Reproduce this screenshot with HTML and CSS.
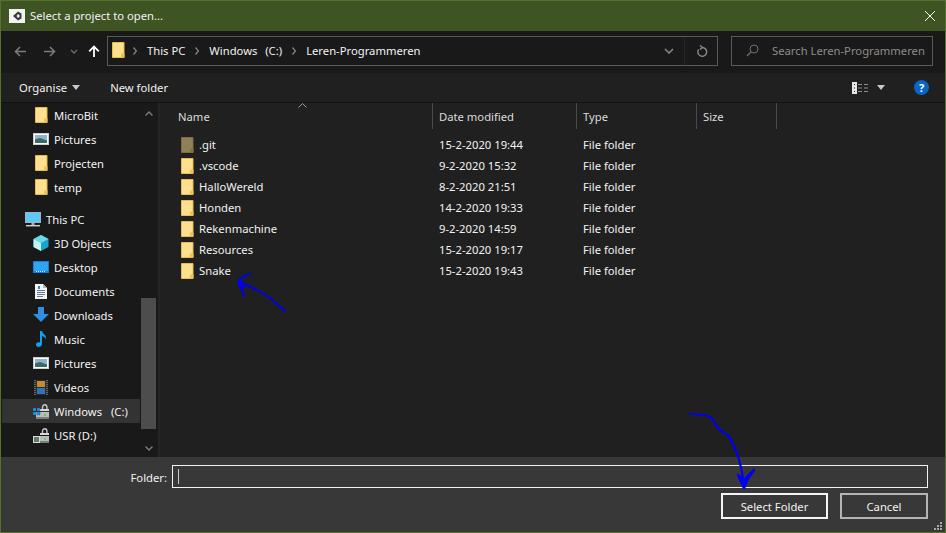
FILE: index.html
```html
<!DOCTYPE html>
<html lang="en">
<head>
    <meta charset="UTF-8">
    <meta name="viewport" content="width=device-width, initial-scale=1.0">
    <title>Select a project to open...</title>
    <link rel="stylesheet" href="styles.css">
</head>
<body>
    <svg class="defs" width="0" height="0">
        <defs>
            <symbol id="folder" viewBox="0 0 13 16">
                <path d="M.5.5h11.500v15H.5z" fill="#fde08e" stroke="#e8bc4e"/>
                <path d="M9 15.500v-4h3.500v4z" fill="#e9c25f"/>
            </symbol>
            <symbol id="pictures" viewBox="0 0 16 12">
                <rect x=".5" y=".5" width="15" height="11" fill="#fff" stroke="#cfcfcf"/>
                <rect x="2" y="2" width="12" height="8" fill="#8fb3cf"/>
                <path d="M2 6.500l5-1.500 7 2.500V10H2z" fill="#3d6a62"/>
            </symbol>
            <symbol id="chevron" viewBox="0 0 4 8">
                <path d="M.5.5L3.500 4 .5 7.500" stroke="#8a8a8a" stroke-width="1.200" fill="none"/>
            </symbol>
            <symbol id="lock" viewBox="0 0 16 15">
                <path d="M9.500 5V3a2.200 2.200 0 0 1 4.400 0v2" stroke="#c8c8c8" stroke-width="1.400" fill="none"/>
                <rect x="7" y="5" width="9" height="2" fill="#d8d8d8"/>
                <rect x="3" y="8" width="13" height="7" fill="#bcbcbc"/>
                <rect x="3" y="13" width="13" height="2" fill="#7d7d7d"/>
                <path d="M11 11h2" stroke="#34d64a" stroke-width="1.500"/>
            </symbol>
        </defs>
    </svg>
    <div class="dialog">
        <header class="titlebar">
            <svg class="app-icon" width="16" height="14" viewBox="0 0 16 14">
                <rect width="16" height="14" fill="#f4f4f4"/>
                <path d="M9 2.500l3.500 2v5l-3.500 2-5-4.500z" fill="#3a3a3a"/>
                <path d="M9 5L7.500 7 9 9l1.500-.9V5.900z" fill="#f4f4f4"/>
            </svg>
            <span class="title">Select a project to open...</span>
            <svg class="close" width="10" height="10" viewBox="0 0 10 10"><path d="M0 0l10 10M10 0L0 10" stroke="#fff" fill="none"/></svg>
        </header>

        <div class="addressbar">
            <div class="nav">
                <svg width="12" height="11" viewBox="0 0 12 11"><path d="M12 5.500H1.500M6 1L1.500 5.500 6 10" stroke="#7c7c7c" stroke-width="1.500" fill="none"/></svg>
                <svg class="nav-fwd" width="12" height="11" viewBox="0 0 12 11"><path d="M0 5.500h10.500M6 1l4.500 4.500L6 10" stroke="#7c7c7c" stroke-width="1.500" fill="none"/></svg>
                <svg class="nav-down" width="8" height="5" viewBox="0 0 8 5"><path d="M1 1l3 3 3-3" stroke="#6e6e6e" stroke-width="1.300" fill="none"/></svg>
                <svg class="nav-up" width="12" height="12" viewBox="0 0 12 12"><path d="M6 12V2M1.200 6.300L6 1.500l4.800 4.800" stroke="#fff" stroke-width="1.800" fill="none"/></svg>
            </div>
            <div class="path">
                <svg class="crumb path-folder" width="13" height="16"><use href="#folder"/></svg>
                <svg class="crumb-sep" width="4" height="8"><use href="#chevron"/></svg><span class="crumb">This PC</span>
                <svg class="crumb-sep" width="4" height="8"><use href="#chevron"/></svg><span class="crumb crumb-drive">Windows&nbsp; (C:)</span>
                <svg class="crumb-sep" width="4" height="8"><use href="#chevron"/></svg><span class="crumb">Leren-Programmeren</span>
                <span class="path-end">
                    <svg width="10" height="6" viewBox="0 0 10 6"><path d="M1 1l4 4 4-4" stroke="#8a8a8a" stroke-width="1.500" fill="none"/></svg>
                    <i class="path-div"></i>
                    <svg width="11" height="12" viewBox="0 0 11 12"><path d="M3 .5l2.500 2L3 4.500M5 2.500A4.400 4.400 0 1 1 1.700 4.300" stroke="#8a8a8a" stroke-width="1.400" fill="none"/></svg>
                </span>
            </div>
            <div class="search">
                <svg width="13" height="13" viewBox="0 0 13 13"><circle cx="8" cy="5" r="4" stroke="#6f6f6f" fill="none"/><path d="M5 8l-4 4" stroke="#6f6f6f" stroke-width="1.300"/></svg>
                <span>Search Leren-Programmeren</span>
            </div>
        </div>

        <div class="toolbar">
            <span class="tool">Organise<i class="caret"></i></span>
            <span class="tool tool-new">New folder</span>
            <span class="toolbar-right">
                <svg width="16" height="12" viewBox="0 0 16 12">
                    <rect width="5" height="12" fill="#e6e6e6"/>
                    <path d="M2 2h1v1H2zM2 5.500h1v1H2zM2 9h1v1H2z" fill="#333"/>
                    <path d="M6 2.500h4M12 2.500h4M6 6h4M12 6h4M6 9.500h4M12 9.500h4" stroke="#8c8c8c"/>
                </svg>
                <i class="caret caret-view"></i>
                <span class="help">?</span>
            </span>
        </div>

        <div class="main">
            <aside class="sidebar">
                <ul class="tree">
                    <li class="tree-item"><span class="tree-icon"><svg width="13" height="16"><use href="#folder"/></svg></span>MicroBit</li>
                    <li class="tree-item"><span class="tree-icon"><svg width="16" height="12"><use href="#pictures"/></svg></span>Pictures</li>
                    <li class="tree-item"><span class="tree-icon"><svg width="13" height="16"><use href="#folder"/></svg></span>Projecten</li>
                    <li class="tree-item"><span class="tree-icon"><svg width="13" height="16"><use href="#folder"/></svg></span>temp</li>
                    <li class="tree-item tree-root">
                        <span class="tree-icon"><svg width="16" height="15" viewBox="0 0 16 15"><rect x=".5" y=".5" width="15" height="10" fill="#5cc8f5" stroke="#9fb6c2"/><path d="M6.500 11h3v2h-3z" fill="#aaa"/><path d="M1 13.700h14" stroke="#ccc" stroke-width="1.500"/></svg></span>This PC
                    </li>
                    <li class="tree-item"><span class="tree-icon"><svg width="16" height="16" viewBox="0 0 16 16"><path d="M8 0l7.500 4v8L8 16 .5 12V4z" fill="#18a5c9"/><path d="M8 0l7.500 4L8 8 .5 4z" fill="#6ad9e8"/><path d="M.5 4L8 8v8L.5 12z" fill="#c4f3f6"/></svg></span>3D Objects</li>
                    <li class="tree-item"><span class="tree-icon"><svg width="16" height="12" viewBox="0 0 16 12"><rect width="16" height="12" fill="#0f7fd8"/><rect x="1" y="1" width="14" height="9" fill="#2fa6f5"/><path d="M3 10.500h10" stroke="#cde9ff" stroke-dasharray="1 1"/></svg></span>Desktop</li>
                    <li class="tree-item"><span class="tree-icon"><svg width="12" height="15" viewBox="0 0 12 15"><path d="M0 0h8l4 4v11H0z" fill="#f5f5f5"/><path d="M8 0v4h4z" fill="#b5b5b5"/><path d="M2 6.500h8M2 8.500h8M2 10.500h8M2 12.500h6" stroke="#5f7c96"/><path d="M3 2h2v3H3z" fill="#2b87d1"/></svg></span>Documents</li>
                    <li class="tree-item"><span class="tree-icon"><svg width="16" height="16" viewBox="0 0 16 16"><path d="M5 0h6v7h5l-8 8-8-8h5z" fill="#2e8fe0"/></svg></span>Downloads</li>
                    <li class="tree-item"><span class="tree-icon"><svg width="11" height="16" viewBox="0 0 11 16"><path d="M4 0h2c.5 3 5 4 4 8.500C9.500 6.500 8 5.500 6 5v8c0 2-2 3-3.500 3S0 15 0 13.500 2 11 4 11.500z" fill="#12a0ef"/></svg></span>Music</li>
                    <li class="tree-item"><span class="tree-icon"><svg width="16" height="12"><use href="#pictures"/></svg></span>Pictures</li>
                    <li class="tree-item"><span class="tree-icon"><svg width="14" height="15" viewBox="0 0 14 15"><rect width="14" height="15" fill="#2b2b2b"/><path d="M1 0v15M13 0v15" stroke="#999" stroke-dasharray="1 1"/><rect x="3" y="1" width="8" height="6" fill="#c58b2c"/><rect x="3" y="8" width="8" height="6" fill="#3273b8"/></svg></span>Videos</li>
                    <li class="tree-item is-selected"><span class="tree-icon"><svg width="16" height="15" viewBox="0 0 16 15"><use href="#lock"/><path d="M0 4h3v3H0zM4 4h3v3H4zM0 8h3v3H0zM4 8h3v3H4z" fill="#1e9cf0" stroke="#2a2a2a" stroke-width=".3"/></svg></span><span class="drive">Windows&nbsp; (C:)</span></li>
                    <li class="tree-item"><span class="tree-icon"><svg width="16" height="15" viewBox="0 0 16 15"><use href="#lock"/><rect x="0" y="8" width="7" height="7" fill="#d8d8d8"/><rect x="1" y="9" width="5" height="5" fill="#5c7f66"/></svg></span>USR (D:)</li>
                </ul>
                <div class="scrollbar">
                    <svg width="8" height="5" viewBox="0 0 8 5"><path d="M.5 4.500L4 1l3.500 3.500" stroke="#777" stroke-width="1.500" fill="none"/></svg>
                    <div class="scroll-track"><div class="scroll-thumb"></div></div>
                    <svg width="8" height="5" viewBox="0 0 8 5"><path d="M.5.5L4 4 7.500.5" stroke="#777" stroke-width="1.500" fill="none"/></svg>
                </div>
            </aside>

            <section class="files">
                <svg class="sort-arrow" width="9" height="5" viewBox="0 0 9 5"><path d="M.5 4.500l4-4 4 4" stroke="#9a9a9a" fill="none"/></svg>
                <div class="file-row file-head">
                    <span class="col-name">Name</span>
                    <span class="col-date">Date modified</span>
                    <span class="col-type">Type</span>
                    <span class="col-size">Size</span>
                </div>
                <div class="file-list">
                    <div class="file-row"><span class="col-name"><svg class="is-hidden" width="13" height="16"><use href="#folder"/></svg>.git</span><span class="col-date">15-2-2020 19:44</span><span class="col-type">File folder</span></div>
                    <div class="file-row"><span class="col-name"><svg width="13" height="16"><use href="#folder"/></svg>.vscode</span><span class="col-date">9-2-2020 15:32</span><span class="col-type">File folder</span></div>
                    <div class="file-row"><span class="col-name"><svg width="13" height="16"><use href="#folder"/></svg>HalloWereld</span><span class="col-date">8-2-2020 21:51</span><span class="col-type">File folder</span></div>
                    <div class="file-row"><span class="col-name"><svg width="13" height="16"><use href="#folder"/></svg>Honden</span><span class="col-date">14-2-2020 19:33</span><span class="col-type">File folder</span></div>
                    <div class="file-row"><span class="col-name"><svg width="13" height="16"><use href="#folder"/></svg>Rekenmachine</span><span class="col-date">9-2-2020 14:59</span><span class="col-type">File folder</span></div>
                    <div class="file-row"><span class="col-name"><svg width="13" height="16"><use href="#folder"/></svg>Resources</span><span class="col-date">15-2-2020 19:17</span><span class="col-type">File folder</span></div>
                    <div class="file-row"><span class="col-name"><svg width="13" height="16"><use href="#folder"/></svg>Snake</span><span class="col-date">15-2-2020 19:43</span><span class="col-type">File folder</span></div>
                </div>
            </section>
        </div>

        <footer class="footer">
            <div class="folder-row">
                <label class="folder-label">Folder:</label>
                <div class="folder-input"><i class="text-cursor"></i></div>
            </div>
            <div class="buttons">
                <button class="btn btn-primary">Select Folder</button>
                <button class="btn">Cancel</button>
            </div>
            <svg class="grip" width="8" height="8" viewBox="0 0 8 8"><path d="M6 0h2v2H6zM3 3h2v2H3zM6 3h2v2H6zM0 6h2v2H0zM3 6h2v2H3zM6 6h2v2H6z" fill="#a8a8a8"/></svg>
        </footer>

        <!-- hand drawn arrows on top of the screenshot -->
        <svg class="scribble" width="946" height="533" viewBox="0 0 946 533">
            <g stroke="#0000f0" fill="none" stroke-linecap="round" stroke-linejoin="round">
                <path d="M285 311c-5-4-10-9-15-13-5-4-11-7-17-10-4-2-8-4-12-6" stroke-width="2"/>
                <path d="M250 274c-4 1-9 3-11 6-2 3 0 6 2 9 2 2 3 5 3 7" stroke-width="2"/>
                <path d="M240 281l3 6" stroke-width="3"/>
                <path d="M690 414c7 0 14 0 20 3 4 2 5 7 8 11 3 4 7 5 10 7 4 5 6 12 9 18 2 7 4 13 5 20 1 5 2 10 2 15" stroke-width="2.200"/>
                <path d="M738 475l6 13 3-8 7-10-8 8-2 3-1-2z" fill="#0000f0" stroke-width="2.500"/>
            </g>
        </svg>
    </div>
</body>
</html>
```

FILE: styles.css
```css
* {
    box-sizing: border-box;
}
html, body {
    margin: 0;
    padding: 0;
}
body {
    font-family: "Noto Sans", Arial, sans-serif;
    font-size: 11.25px;
    color: #f2f2f2;
    background: #4f6b30;
    overflow: hidden;
}
.defs {
    position: absolute;
}
.dialog {
    position: relative;
    width: 946px;
    height: 533px;
    padding: 1px;
    display: flex;
    flex-direction: column;
    background: #55702f;
}
.titlebar {
    height: 30px;
    flex: none;
    display: flex;
    align-items: center;
    padding: 0 10px 0 8px;
    background: #3f5423;
}
.app-icon {
    margin-right: 5px;
}
.title {
    flex: 1;
    margin-bottom: 2px;
}
.close {
    margin-bottom: 1px;
}
.addressbar {
    height: 42px;
    flex: none;
    display: flex;
    align-items: flex-start;
    padding: 5px 12px 0 13px;
    background: #191919;
}
.nav {
    display: flex;
    align-items: center;
    width: 93px;
    height: 30px;
}
.nav-fwd {
    margin-left: 18px;
}
.nav-down {
    margin-left: 14px;
}
.nav-up {
    margin-left: 10px;
}
.path {
    width: 611px;
    height: 30px;
    display: flex;
    align-items: center;
    padding-left: 4px;
    border: 1px solid #5a5a5a;
}
.crumb {
    margin-bottom: 2px;
}
.crumb-sep {
    margin: 0 10px;
}
.path-folder {
    margin-right: -2px;
}
.crumb-drive {
    word-spacing: 1px;
}
.drive {
    word-spacing: 1.5px;
}
.path-end {
    margin-left: auto;
    height: 100%;
    display: flex;
    align-items: center;
}
.path-div {
    width: 1px;
    height: 100%;
    margin: 0 12px 0 10px;
    background: #262626;
}
.path-end svg:last-child {
    margin-right: 9px;
}
.search {
    width: 202px;
    height: 30px;
    margin-left: 13px;
    display: flex;
    align-items: center;
    padding: 0 0 2px 14px;
    gap: 13px;
    border: 1px solid #5a5a5a;
    color: #8c8c8c;
    white-space: nowrap;
}
.toolbar {
    height: 30px;
    flex: none;
    display: flex;
    align-items: center;
    padding: 0 16px 0 18px;
    background: #202020;
    border-bottom: 1px solid #111;
}
.tool {
    display: flex;
    align-items: center;
}
.tool-new {
    margin-left: 30px;
}
.caret {
    width: 0;
    height: 0;
    margin-left: 5px;
    border: 4px solid transparent;
    border-top: 5px solid #c8c8c8;
    border-bottom: 0;
}
.toolbar-right {
    margin-left: auto;
    display: flex;
    align-items: center;
}
.caret-view {
    margin-left: 9px;
}
.help {
    width: 15px;
    height: 15px;
    margin-left: 29px;
    border-radius: 50%;
    background: #0b66c3;
    color: #fff;
    font-size: 11px;
    font-weight: 700;
    line-height: 15px;
    text-align: center;
}
.main {
    flex: 1;
    min-height: 0;
    display: flex;
}
.sidebar {
    width: 159px;
    flex: none;
    display: flex;
    padding-right: 1px;
    background: #191919;
    border-right: 2px solid #252525;
}
.tree {
    flex: 1;
    list-style: none;
    margin: 0;
    padding: 0;
}
.tree-item {
    height: 24px;
    display: flex;
    align-items: center;
    padding-left: 28px;
}
.tree-icon {
    width: 24px;
    margin-right: 1px;
    flex: none;
    display: flex;
    align-items: center;
    justify-content: center;
}
.tree-root {
    margin-top: 8px;
    padding-left: 20px;
}
.is-selected {
    margin: 0 1px;
    padding-left: 27px;
    background: #333;
}
.scrollbar {
    width: 16px;
    flex: none;
    display: flex;
    flex-direction: column;
    align-items: center;
    justify-content: space-between;
    padding: 8px 0 6px;
}
.scroll-track {
    flex: 1;
    width: 15px;
    align-self: flex-start;
    display: flex;
    flex-direction: column;
    justify-content: flex-end;
    padding: 6px 0 17px;
}
.scroll-thumb {
    height: 131px;
    background: #4d4d4d;
}
.files {
    position: relative;
    flex: 1;
    padding-left: 8px;
    background: #202020;
}
.sort-arrow {
    position: absolute;
    left: 138px;
    top: 0;
}
.file-row {
    display: flex;
    height: 21px;
    align-items: center;
}
.file-head {
    height: 26px;
    color: #dcdcdc;
}
.file-head span {
    height: 100%;
    display: flex;
    align-items: center;
    border-right: 1px solid #4a4a4a;
}
.file-list {
    margin-top: 5px;
}
.col-name {
    width: 265px;
    display: flex;
    align-items: center;
    padding-left: 10px;
}
.col-name svg {
    margin: 0 5px 0 3px;
}
.is-hidden {
    opacity: .5;
}
.col-date {
    width: 144px;
    padding-left: 6px;
}
.col-type {
    width: 120px;
    padding-left: 6px;
}
.col-size {
    width: 80px;
    padding-left: 6px;
}
.footer {
    position: relative;
    height: 75px;
    flex: none;
    padding: 8px 17px 0 0;
    background: #383838;
}
.folder-row {
    display: flex;
    align-items: center;
    justify-content: flex-end;
}
.folder-label {
    margin: 1px 5px 0 0;
}
.folder-input {
    width: 756px;
    height: 23px;
    display: flex;
    align-items: center;
    padding-left: 5px;
    border: 1px solid #f2f2f2;
}
.text-cursor {
    width: 1px;
    height: 15px;
    background: #c8c8c8;
}
.buttons {
    display: flex;
    justify-content: flex-end;
    gap: 12px;
    margin-top: 5px;
}
.btn {
    width: 88px;
    height: 26px;
    padding: 0;
    border: 2px solid #b4b4b4;
    background: #383838;
    color: #f2f2f2;
    font-family: inherit;
    font-size: 11.25px;
}
.btn-primary {
    width: 107px;
    border-color: #f5f5f5;
}
.grip {
    position: absolute;
    right: 3px;
    bottom: 2px;
}
.scribble {
    position: absolute;
    left: 0;
    top: 0;
    pointer-events: none;
}
```
